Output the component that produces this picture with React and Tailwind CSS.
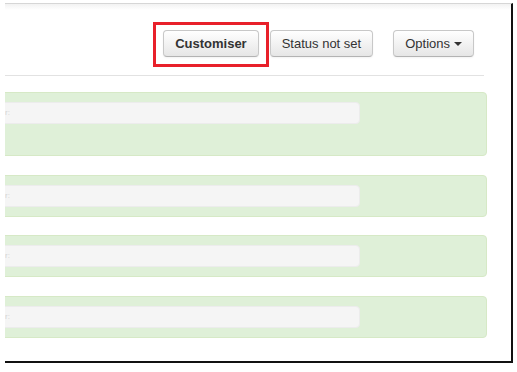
import React from "react";

function Btn({ children, bold }) {
  return (
    <button
      className={
        "h-[27px] rounded-[4px] border border-[#c8c8c8] border-b-[#b3b3b3] bg-[linear-gradient(#ffffff,#e6e6e6)] px-[11px] text-[13px] leading-none text-[#333] shadow-[inset_0_1px_0_rgba(255,255,255,0.2),0_1px_2px_rgba(0,0,0,0.05)] " +
        (bold ? "font-bold" : "font-normal")
      }
      style={{ fontFamily: '"Liberation Sans", Arial, sans-serif' }}
    >
      {children}
    </button>
  );
}

function Panel({ tall }) {
  return (
    <div
      className={
        "-ml-[40px] w-[522px] rounded-[4px] border border-[#d6e9c6] bg-[#dff0d8] pt-[9px] " +
        (tall ? "h-[64px]" : "h-[42px]")
      }
    >
      <div className="flex h-[22px] w-[394px] items-center rounded-[4px] border border-[#ececec] bg-[#f5f5f5] pl-[38px] text-[8px] leading-none text-[#d4d4d4]">
        <span style={{ fontFamily: '"Liberation Sans", Arial, sans-serif' }}>r:</span>
      </div>
    </div>
  );
}

export default function App() {
  return (
    <div
      className="h-[372px] w-[517px] overflow-hidden bg-white"
      style={{ fontFamily: '"Liberation Sans", Arial, sans-serif' }}
    >
      <div className="ml-[5px] mt-[3px] h-[360px] w-[508px] overflow-hidden border-b-2 border-r-2 border-t border-b-[#111] border-r-[#111] border-t-[#d6d6d6]">
        <div className="h-[6px] w-full bg-[linear-gradient(#f2f2f2,#ffffff)]" />
        <div className="w-[481px]">
          <div className="flex h-[65px] items-start justify-end pr-[12px] pt-[20px]">
            <div className="relative">
              <div className="pointer-events-none absolute -left-[10px] -top-[8px] h-[45px] w-[116px] border-[3px] border-[#e8202a]" />
              <Btn bold>Customiser</Btn>
            </div>
            <div className="ml-[11px]">
              <Btn>Status not set</Btn>
            </div>
            <div className="ml-[20px]">
              <Btn>
                <span className="flex items-center gap-[4px]">
                  Options
                  <svg width="8" height="4" viewBox="0 0 8 4">
                    <path d="M0 0 L8 0 L4 4 Z" fill="#333" />
                  </svg>
                </span>
              </Btn>
            </div>
          </div>
          <div className="h-px w-[479px] bg-[#e2e2e2]" />
          <div className="flex flex-col pt-[16px]">
            <Panel tall />
            <div className="mt-[19px]">
              <Panel />
            </div>
            <div className="mt-[18px]">
              <Panel />
            </div>
            <div className="mt-[19px]">
              <Panel />
            </div>
          </div>
        </div>
      </div>
    </div>
  );
}
